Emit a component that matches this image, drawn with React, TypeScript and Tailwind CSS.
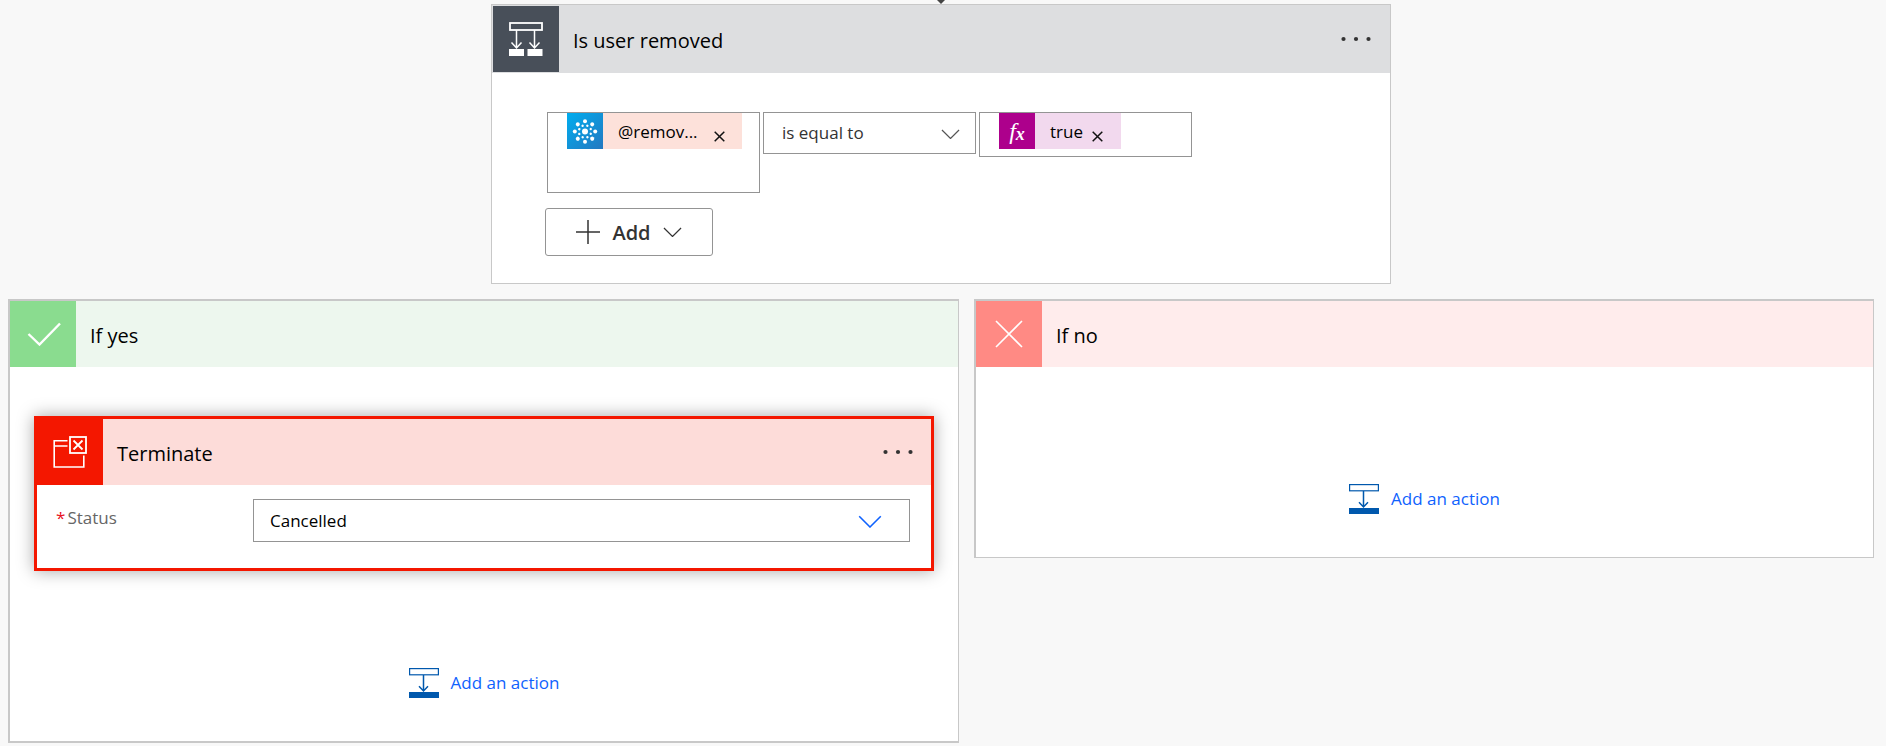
import React from "react";

const ConditionIcon = () => (
  <svg width="34" height="34" viewBox="0 0 34 34" fill="none" aria-hidden="true">
    <rect x="1" y="1" width="32" height="7" stroke="#fff" strokeWidth="1.8" />
    <path
      d="M7.500 8v18M2.500 20.500l5 5.500 5-5.500M25.500 8v18M20.500 20.500l5 5.500 5-5.500"
      stroke="#fff"
      strokeWidth="1.5"
    />
    <path d="M0 27h15v7H0zM18.500 27h15v7h-15z" fill="#fff" />
  </svg>
);

const CheckIcon = () => (
  <svg width="34" height="24" viewBox="0 0 34 24" fill="none" className="ml-[2px]" aria-hidden="true">
    <path d="M1.500 12l11 10.500L33 1.500" stroke="#fff" strokeWidth="2.4" />
  </svg>
);

const CrossIcon = () => (
  <svg width="28" height="28" viewBox="0 0 28 28" fill="none" aria-hidden="true">
    <path d="M1 1l26 26M27 1L1 27" stroke="#fff" strokeWidth="1.6" />
  </svg>
);

const TerminateIcon = () => (
  <svg width="34" height="32" viewBox="0 0 34 32" fill="none" aria-hidden="true">
    <path
      d="M14.500 4.800H1.200v26.200h29.600V19.500M1.200 10h13.300"
      stroke="#fff"
      strokeWidth="1.6"
    />
    <rect x="17" y="1" width="16" height="16" stroke="#fff" strokeWidth="1.8" />
    <path d="M20.500 4.500l9 9M29.500 4.500l-9 9" stroke="#fff" strokeWidth="1.8" />
  </svg>
);

const AddActionIcon = () => (
  <svg width="30" height="30" viewBox="0 0 30 30" fill="none" aria-hidden="true">
    <rect x="0.6" y="0.6" width="28.8" height="6.2" stroke="#0058ad" strokeWidth="1.2" />
    <path d="M14.500 7v16M10 18.300l4.500 4.700 4.500-4.700" stroke="#0058ad" strokeWidth="1.5" />
    <path d="M0 24h30v6H0z" fill="#0058ad" />
  </svg>
);

const Chevron = ({ className = "" }: { className?: string }) => (
  <svg viewBox="0 0 20 11" fill="none" className={className} aria-hidden="true">
    <path d="M1 1l9 9 9-9" stroke="currentColor" strokeWidth="1.3" />
  </svg>
);

const EventIcon = () => (
  <svg width="36" height="36" viewBox="0 0 36 36" aria-hidden="true">
    <defs>
      <linearGradient id="eventBg" x1="0" y1="0" x2="1" y2="1">
        <stop offset="0" stopColor="#00adef" />
        <stop offset="1" stopColor="#2478c0" />
      </linearGradient>
    </defs>
    <rect width="36" height="36" fill="url(#eventBg)" />
    <g fill="#fff">
      <circle cx="18" cy="18.5" r="3" />
      {[0, 45, 90, 135, 180, 225, 270, 315].map((angle) => (
        <circle
          key={angle}
          cx="18"
          cy="8.3"
          r="2"
          transform={`rotate(${angle} 18 18.5)`}
        />
      ))}
      {[22, 67, 112, 157, 202, 247, 292, 337].map((angle) => (
        <circle
          key={angle}
          cx="18"
          cy="12.3"
          r="1.2"
          transform={`rotate(${angle} 18 18.5)`}
        />
      ))}
    </g>
  </svg>
);

const MoreButton = () => (
  <button type="button" aria-label="More" className="ml-auto mr-[18px] py-2">
    <svg width="30" height="6" viewBox="0 0 30 6" fill="#333" aria-hidden="true">
      <circle cx="2.5" cy="3" r="2.1" />
      <circle cx="15" cy="3" r="2.1" />
      <circle cx="27.5" cy="3" r="2.1" />
    </svg>
  </button>
);

const Title = ({ children }: { children: React.ReactNode }) => (
  <h2 className="ml-[14px] pt-[3px] text-[20px]">{children}</h2>
);

const Token = ({
  icon,
  label,
  className,
}: {
  icon: React.ReactNode;
  label: string;
  className: string;
}) => (
  <span className={`flex h-9 items-center text-[17px] ${className}`}>
    {icon}
    <span className="ml-[15px] pt-[2px]">{label}</span>
    <button type="button" aria-label={`Remove ${label}`} className="pt-[10px]">
      <svg width="11" height="11" viewBox="0 0 11 11" fill="none">
        <path d="M.7.700l9.600 9.600M10.300.700L.7 10.300" stroke="#111" strokeWidth="1.5" />
      </svg>
    </button>
  </span>
);

const AddAction = () => (
  <button type="button" className="mx-auto flex items-center gap-3 text-[17px] text-[#0f62fe]">
    <AddActionIcon />
    Add an action
  </button>
);

const App = () => {
  return (
    <main className="min-h-screen bg-[#f8f8f8] pl-2 pr-3 font-['Open_Sans','Noto_Sans',sans-serif] text-black">
      <svg width="8" height="4" viewBox="0 0 8 4" className="mx-auto block" aria-hidden="true">
        <path d="M0 0h8L4 4z" fill="#444" />
      </svg>

      <section className="mx-auto w-full max-w-[900px] border border-[#c8c8c8] bg-white pb-[27px]">
        <header className="flex items-center bg-[#dddee0] p-px">
          <div className="flex size-[66px] items-center justify-center bg-[#484f59]">
            <ConditionIcon />
          </div>
          <Title>Is user removed</Title>
          <MoreButton />
        </header>

        <div className="mt-[39px] flex items-start gap-[3px] pl-[55px]">
          <div className="flex w-[213px] flex-wrap border border-[#949494] pl-[19px] pr-[17px]">
            <Token
              icon={<EventIcon />}
              label="@remov..."
              className="w-full bg-[#fde1da] [&>button]:ml-auto [&>button]:mr-[17px]"
            />
            <input aria-label="Value to compare" className="h-[43px] w-full outline-none" />
          </div>

          <div className="relative w-[213px]">
            <select
              aria-label="Operator"
              className="h-[42px] w-full appearance-none border border-[#949494] bg-white pl-[18px] text-[17px] text-[#333]"
            >
              <option>is equal to</option>
              <option>is not equal to</option>
            </select>
            <Chevron className="pointer-events-none absolute right-4 top-[17px] w-[19px] text-[#555]" />
          </div>

          <div className="flex w-[213px] border border-[#949494] pb-[7px] pl-[19px]">
            <Token
              icon={
                <span className="flex size-9 items-center justify-center bg-[#ad008c] font-['Liberation_Serif',serif] text-[24px] italic leading-none text-white">
                  f<span className="pt-[6px] text-[18px] font-bold leading-none">x</span>
                </span>
              }
              label="true"
              className="bg-[#f2d9ee] [&>button]:ml-[9px] [&>button]:mr-[18px]"
            />
            <input aria-label="Compared value" className="w-0 flex-1 outline-none" />
          </div>
        </div>

        <button
          type="button"
          className="ml-[53px] mt-[15px] flex h-12 w-[168px] items-center justify-center rounded-[3px] border border-[#949494] text-[20px] font-semibold text-[#333]"
        >
          <svg width="24" height="24" viewBox="0 0 24 24" fill="none" aria-hidden="true">
            <path d="M12 0v24M0 12h24" stroke="#333" strokeWidth="1.5" />
          </svg>
          <span className="mx-3 pt-px">Add</span>
          <Chevron className="w-[19px]" />
        </button>
      </section>

      <div className="mt-[15px] grid grid-cols-[951fr_900fr] items-start gap-[15px]">
        <section className="border-2 border-r border-[#c8c8c8] bg-white pb-[43px]">
          <header className="flex items-center bg-[#edf7ee]">
            <div className="flex size-[66px] items-center justify-center bg-[#8adc8f]">
              <CheckIcon />
            </div>
            <Title>If yes</Title>
          </header>

          <article className="mx-6 mb-[97px] mt-[49px] border-[3px] border-[#f41700] shadow-[0_0_16px_rgba(0,0,0,0.35)]">
            <header className="flex items-center bg-[#fddcd9]">
              <div className="flex size-[66px] items-center justify-center bg-[#f41700]">
                <TerminateIcon />
              </div>
              <Title>Terminate</Title>
              <MoreButton />
            </header>
            <div className="flex items-start pb-[26px] pl-[19px] pr-[21px] pt-[14px] text-[17px]">
              <label htmlFor="status" className="w-[197px] shrink-0 pt-[6px] text-[#666]">
                <span className="mr-[2px] text-[#e81123]">*</span>
                Status
              </label>
              <div className="relative flex-1">
                <select
                  id="status"
                  className="block h-[43px] w-full appearance-none border border-[#949494] bg-white pl-4"
                >
                  <option>Cancelled</option>
                  <option>Failed</option>
                  <option>Succeeded</option>
                </select>
                <Chevron className="pointer-events-none absolute right-7 top-4 w-6 text-[#0f62fe]" />
              </div>
            </div>
          </article>

          <AddAction />
        </section>

        <section className="border-2 border-b border-r border-[#c8c8c8] bg-white pb-[43px]">
          <header className="mb-[117px] flex items-center bg-[#ffecec]">
            <div className="flex size-[66px] items-center justify-center bg-[#ff8a84]">
              <CrossIcon />
            </div>
            <Title>If no</Title>
          </header>

          <AddAction />
        </section>
      </div>
    </main>
  );
};

export default App;
